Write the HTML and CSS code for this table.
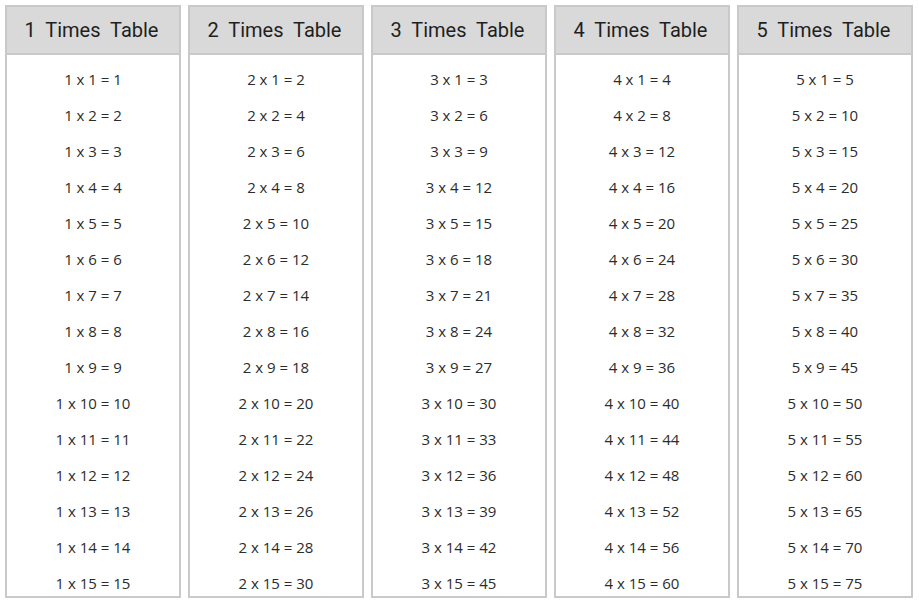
FILE: index.html
```html
<!DOCTYPE html>
<html>
<head>
<meta charset="utf-8">
<link rel="stylesheet" href="styles.css">
</head>
<body>
<div class="tables">
  <div class="col">
    <div class="head">1&nbsp; Times&nbsp; Table</div>
    <ul class="rows">
      <li>1 x 1 = 1</li><li>1 x 2 = 2</li><li>1 x 3 = 3</li><li>1 x 4 = 4</li><li>1 x 5 = 5</li>
      <li>1 x 6 = 6</li><li>1 x 7 = 7</li><li>1 x 8 = 8</li><li>1 x 9 = 9</li><li>1 x 10 = 10</li>
      <li>1 x 11 = 11</li><li>1 x 12 = 12</li><li>1 x 13 = 13</li><li>1 x 14 = 14</li><li>1 x 15 = 15</li>
    </ul>
  </div>
  <div class="col">
    <div class="head">2&nbsp; Times&nbsp; Table</div>
    <ul class="rows">
      <li>2 x 1 = 2</li><li>2 x 2 = 4</li><li>2 x 3 = 6</li><li>2 x 4 = 8</li><li>2 x 5 = 10</li>
      <li>2 x 6 = 12</li><li>2 x 7 = 14</li><li>2 x 8 = 16</li><li>2 x 9 = 18</li><li>2 x 10 = 20</li>
      <li>2 x 11 = 22</li><li>2 x 12 = 24</li><li>2 x 13 = 26</li><li>2 x 14 = 28</li><li>2 x 15 = 30</li>
    </ul>
  </div>
  <div class="col">
    <div class="head">3&nbsp; Times&nbsp; Table</div>
    <ul class="rows">
      <li>3 x 1 = 3</li><li>3 x 2 = 6</li><li>3 x 3 = 9</li><li>3 x 4 = 12</li><li>3 x 5 = 15</li>
      <li>3 x 6 = 18</li><li>3 x 7 = 21</li><li>3 x 8 = 24</li><li>3 x 9 = 27</li><li>3 x 10 = 30</li>
      <li>3 x 11 = 33</li><li>3 x 12 = 36</li><li>3 x 13 = 39</li><li>3 x 14 = 42</li><li>3 x 15 = 45</li>
    </ul>
  </div>
  <div class="col">
    <div class="head">4&nbsp; Times&nbsp; Table</div>
    <ul class="rows">
      <li>4 x 1 = 4</li><li>4 x 2 = 8</li><li>4 x 3 = 12</li><li>4 x 4 = 16</li><li>4 x 5 = 20</li>
      <li>4 x 6 = 24</li><li>4 x 7 = 28</li><li>4 x 8 = 32</li><li>4 x 9 = 36</li><li>4 x 10 = 40</li>
      <li>4 x 11 = 44</li><li>4 x 12 = 48</li><li>4 x 13 = 52</li><li>4 x 14 = 56</li><li>4 x 15 = 60</li>
    </ul>
  </div>
  <div class="col">
    <div class="head">5&nbsp; Times&nbsp; Table</div>
    <ul class="rows">
      <li>5 x 1 = 5</li><li>5 x 2 = 10</li><li>5 x 3 = 15</li><li>5 x 4 = 20</li><li>5 x 5 = 25</li>
      <li>5 x 6 = 30</li><li>5 x 7 = 35</li><li>5 x 8 = 40</li><li>5 x 9 = 45</li><li>5 x 10 = 50</li>
      <li>5 x 11 = 55</li><li>5 x 12 = 60</li><li>5 x 13 = 65</li><li>5 x 14 = 70</li><li>5 x 15 = 75</li>
    </ul>
  </div>
</div>
</body>
</html>
```
FILE: styles.css
```css
html, body {
  margin: 0;
  padding: 0;
  background: #ffffff;
}
body {
  padding: 5px 0 0 5px;
}
.tables {
  display: flex;
  gap: 7px;
}
.col {
  width: 176px;
  height: 593px;
  box-sizing: border-box;
  border: 2px solid #c9c9c9;
  display: flex;
  flex-direction: column;
  overflow: hidden;
  background: #fff;
}
.head {
  height: 46px;
  flex: none;
  background: #d9d9d9;
  border-bottom: 2px solid #c9c9c9;
  display: flex;
  align-items: center;
  justify-content: center;
  font-family: Roboto, "Liberation Sans", sans-serif;
  font-size: 20px;
  color: #1f1f1f;
  padding-right: 3px;
}
.rows {
  list-style: none;
  margin: 0;
  padding: 6px 0 0 0;
}
.rows li {
  height: 36px;
  line-height: 36px;
  text-align: center;
  font-family: "Open Sans", "Liberation Sans", sans-serif;
  font-size: 15px;
  color: #2c2c2c;
}
```
